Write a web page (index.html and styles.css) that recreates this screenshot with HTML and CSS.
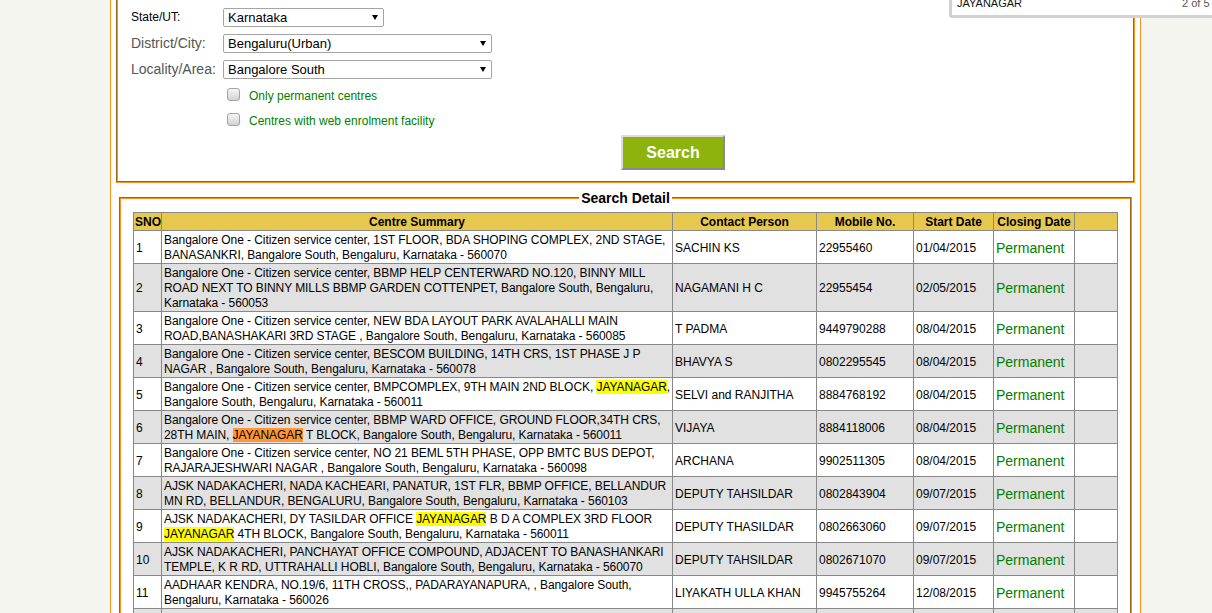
FILE: index.html
```html
<!DOCTYPE html>
<html lang="en">
<head>
    <meta charset="UTF-8">
    <meta name="viewport" content="width=device-width, initial-scale=1.0">
    <title>Locate an Enrolment Centre</title>
    <link rel="stylesheet" href="styles.css">
</head>
<body>

    <!-- browser find bar -->
    <div class="findbar">
        <span class="find-text">JAYANAGAR</span>
        <span class="find-count">2 of 5</span>
    </div>

    <div class="page">
        <form class="search-form" id="searchForm">
            <div class="form-row">
                <label class="field-label label-state" for="state">State/UT:</label>
                <span class="select-wrap narrow">
                    <select id="state" name="state">
                        <option>Karnataka</option>
                    </select>
                </span>
            </div>
            <div class="form-row">
                <label class="field-label" for="district">District/City:</label>
                <span class="select-wrap">
                    <select id="district" name="district">
                        <option>Bengaluru(Urban)</option>
                    </select>
                </span>
            </div>
            <div class="form-row">
                <label class="field-label" for="locality">Locality/Area:</label>
                <span class="select-wrap">
                    <select id="locality" name="locality">
                        <option>Bangalore South</option>
                    </select>
                </span>
            </div>
            <div class="check-row">
                <label class="check"><input type="checkbox" name="permanent"><span>Only permanent centres</span></label>
            </div>
            <div class="check-row">
                <label class="check"><input type="checkbox" name="web"><span>Centres with web enrolment facility</span></label>
            </div>
            <div class="button-row">
                <button type="submit">Search</button>
            </div>
        </form>

        <fieldset class="results">
            <legend>Search Detail</legend>
            <table>
                <colgroup>
                    <col class="c-sno">
                    <col class="c-summary">
                    <col class="c-contact">
                    <col class="c-mobile">
                    <col class="c-start">
                    <col class="c-closing">
                    <col class="c-extra">
                </colgroup>
                <thead>
                    <tr>
                        <th>SNO</th>
                        <th>Centre Summary</th>
                        <th>Contact Person</th>
                        <th>Mobile No.</th>
                        <th>Start Date</th>
                        <th>Closing Date</th>
                        <th></th>
                    </tr>
                </thead>
                <tbody>
                    <tr>
                        <td>1</td>
                        <td class="summary">Bangalore One - Citizen service center, 1ST FLOOR, BDA SHOPING COMPLEX, 2ND STAGE,<br>BANASANKRI, Bangalore South, Bengaluru, Karnataka - 560070</td>
                        <td>SACHIN KS</td>
                        <td>22955460</td>
                        <td>01/04/2015</td>
                        <td class="closing">Permanent</td>
                        <td></td>
                    </tr>
                    <tr>
                        <td>2</td>
                        <td class="summary">Bangalore One - Citizen service center, BBMP HELP CENTERWARD NO.120, BINNY MILL<br>ROAD NEXT TO BINNY MILLS BBMP GARDEN COTTENPET, Bangalore South, Bengaluru,<br>Karnataka - 560053</td>
                        <td>NAGAMANI H C</td>
                        <td>22955454</td>
                        <td>02/05/2015</td>
                        <td class="closing">Permanent</td>
                        <td></td>
                    </tr>
                    <tr>
                        <td>3</td>
                        <td class="summary">Bangalore One - Citizen service center, NEW BDA LAYOUT PARK AVALAHALLI MAIN<br>ROAD,BANASHAKARI 3RD STAGE , Bangalore South, Bengaluru, Karnataka - 560085</td>
                        <td>T PADMA</td>
                        <td>9449790288</td>
                        <td>08/04/2015</td>
                        <td class="closing">Permanent</td>
                        <td></td>
                    </tr>
                    <tr>
                        <td>4</td>
                        <td class="summary">Bangalore One - Citizen service center, BESCOM BUILDING, 14TH CRS, 1ST PHASE J P<br>NAGAR , Bangalore South, Bengaluru, Karnataka - 560078</td>
                        <td>BHAVYA S</td>
                        <td>0802295545</td>
                        <td>08/04/2015</td>
                        <td class="closing">Permanent</td>
                        <td></td>
                    </tr>
                    <tr>
                        <td>5</td>
                        <td class="summary">Bangalore One - Citizen service center, BMPCOMPLEX, 9TH MAIN 2ND BLOCK, <mark>JAYANAGAR</mark>,<br>Bangalore South, Bengaluru, Karnataka - 560011</td>
                        <td>SELVI and RANJITHA</td>
                        <td>8884768192</td>
                        <td>08/04/2015</td>
                        <td class="closing">Permanent</td>
                        <td></td>
                    </tr>
                    <tr>
                        <td>6</td>
                        <td class="summary">Bangalore One - Citizen service center, BBMP WARD OFFICE, GROUND FLOOR,34TH CRS,<br>28TH MAIN, <mark class="current">JAYANAGAR</mark> T BLOCK, Bangalore South, Bengaluru, Karnataka - 560011</td>
                        <td>VIJAYA</td>
                        <td>8884118006</td>
                        <td>08/04/2015</td>
                        <td class="closing">Permanent</td>
                        <td></td>
                    </tr>
                    <tr>
                        <td>7</td>
                        <td class="summary">Bangalore One - Citizen service center, NO 21 BEML 5TH PHASE, OPP BMTC BUS DEPOT,<br>RAJARAJESHWARI NAGAR , Bangalore South, Bengaluru, Karnataka - 560098</td>
                        <td>ARCHANA</td>
                        <td>9902511305</td>
                        <td>08/04/2015</td>
                        <td class="closing">Permanent</td>
                        <td></td>
                    </tr>
                    <tr>
                        <td>8</td>
                        <td class="summary">AJSK NADAKACHERI, NADA KACHEARI, PANATUR, 1ST FLR, BBMP OFFICE, BELLANDUR<br>MN RD, BELLANDUR, BENGALURU, Bangalore South, Bengaluru, Karnataka - 560103</td>
                        <td>DEPUTY TAHSILDAR</td>
                        <td>0802843904</td>
                        <td>09/07/2015</td>
                        <td class="closing">Permanent</td>
                        <td></td>
                    </tr>
                    <tr>
                        <td>9</td>
                        <td class="summary">AJSK NADAKACHERI, DY TASILDAR OFFICE <mark>JAYANAGAR</mark> B D A COMPLEX 3RD FLOOR<br><mark>JAYANAGAR</mark> 4TH BLOCK, Bangalore South, Bengaluru, Karnataka - 560011</td>
                        <td>DEPUTY THASILDAR</td>
                        <td>0802663060</td>
                        <td>09/07/2015</td>
                        <td class="closing">Permanent</td>
                        <td></td>
                    </tr>
                    <tr>
                        <td>10</td>
                        <td class="summary">AJSK NADAKACHERI, PANCHAYAT OFFICE COMPOUND, ADJACENT TO BANASHANKARI<br>TEMPLE, K R RD, UTTRAHALLI HOBLI, Bangalore South, Bengaluru, Karnataka - 560070</td>
                        <td>DEPUTY TAHSILDAR</td>
                        <td>0802671070</td>
                        <td>09/07/2015</td>
                        <td class="closing">Permanent</td>
                        <td></td>
                    </tr>
                    <tr>
                        <td>11</td>
                        <td class="summary">AADHAAR KENDRA, NO.19/6, 11TH CROSS,, PADARAYANAPURA, , Bangalore South,<br>Bengaluru, Karnataka - 560026</td>
                        <td>LIYAKATH ULLA KHAN</td>
                        <td>9945755264</td>
                        <td>12/08/2015</td>
                        <td class="closing">Permanent</td>
                        <td></td>
                    </tr>
                    <tr>
                        <td>12</td>
                        <td class="summary">AADHAAR KENDRA, BBMP WARD OFFICE, 9TH BLOCK,<br><mark>JAYANAGAR</mark>, Bangalore South, Bengaluru, Karnataka - 560069</td>
                        <td>RAVI KUMAR</td>
                        <td>9845012233</td>
                        <td>14/08/2015</td>
                        <td class="closing">Permanent</td>
                        <td></td>
                    </tr>
                </tbody>
            </table>
        </fieldset>
    </div>

</body>
</html>
```

FILE: styles.css
```css
html, body {
    overflow: hidden;
}

body {
    font-family: 'Liberation Sans', Arial, sans-serif;
    background-color: #f5f5f0;
    margin: 0;
    color: #000;
}

.page {
    margin-left: 110px;
    width: 1029px;
    min-height: 100vh;
    background: #fff;
    border-left: 1px solid #f7941d;
    border-right: 1px solid #f7941d;
}

/* search form panel */
.search-form {
    margin: 0 5px;
    border: 2px groove #f7941d;
    border-top: 0;
    padding: 4px 10px 11px 13px;
}

.form-row {
    display: flex;
    align-items: center;
    height: 26px;
}

.field-label {
    width: 92px;
    font-size: 14px;
    color: #555;
}

.label-state {
    font-size: 12px;
    color: #000;
}

.select-wrap {
    position: relative;
    display: inline-block;
}

.select-wrap::after {
    content: "";
    position: absolute;
    top: 7px;
    right: 6px;
    border-left: 3px solid transparent;
    border-right: 3px solid transparent;
    border-top: 5px solid #000;
    pointer-events: none;
}

select {
    appearance: none;
    -webkit-appearance: none;
    display: block;
    width: 269px;
    height: 19px;
    padding: 0 0 0 4px;
    border: 1px solid #a5a5a5;
    border-radius: 2px;
    background: #fff;
    color: #000;
    font-family: 'Liberation Sans', Arial, sans-serif;
    font-size: 13px;
}

.narrow select {
    width: 161px;
}

.check-row {
    display: flex;
    align-items: center;
    height: 25px;
    padding-left: 92px;
}

.check {
    display: flex;
    align-items: center;
    color: #008000;
    font-size: 12px;
}

.check span {
    padding-top: 2px;
}

.check input {
    appearance: none;
    -webkit-appearance: none;
    width: 13px;
    height: 13px;
    margin: 0 9px 0 4px;
    border: 1px solid #a3a3a3;
    border-radius: 3px;
    background: linear-gradient(#f6f6f6, #d2d2d2);
}

.button-row {
    display: flex;
    justify-content: center;
    padding-left: 92px;
    margin-top: 3px;
}

button {
    width: 104px;
    height: 35px;
    background-color: #8cb40c;
    color: #fff;
    border: 2px solid;
    border-color: #dcdcdc #8a8a8a #8a8a8a #dcdcdc;
    font-family: 'Liberation Sans', Arial, sans-serif;
    font-size: 16px;
    font-weight: bold;
    cursor: pointer;
}

/* results */
.results {
    margin: 7px 8px 0;
    border: 2px groove #f7941d;
    padding: 6px 12px 20px;
    min-width: 0;
}

.results legend {
    margin: 0 auto;
    padding: 0 2px;
    font-size: 14px;
    line-height: 16px;
    font-weight: bold;
}

table {
    border-collapse: collapse;
    table-layout: fixed;
    width: 985px;
    font-size: 12px;
    line-height: 15px;
}

.c-sno { width: 28px; }
.c-summary { width: 511px; }
.c-contact { width: 144px; }
.c-mobile { width: 97px; }
.c-start { width: 80px; }
.c-closing { width: 81px; }
.c-extra { width: 43px; }

th {
    background-color: #e6c84f;
    border: 1px solid #888;
    padding: 2px 1px 0;
    font-weight: bold;
    text-align: center;
}

td {
    border: 1px solid #888;
    padding: 2px 2px 0;
    vertical-align: middle;
    text-align: left;
}

tbody tr:nth-child(even) {
    background-color: #e1e1e1;
}

td.summary {
    white-space: nowrap;
    letter-spacing: -0.07px;
}

td.closing {
    color: #008000;
    font-size: 14px;
}

mark {
    background-color: #ffff00;
    color: inherit;
}

mark.current {
    background-color: #ff9632;
}

/* find bar overlay */
.findbar {
    position: fixed;
    top: -12px;
    left: 949px;
    width: 296px;
    height: 30px;
    box-sizing: border-box;
    display: flex;
    align-items: center;
    padding-left: 5px;
    background: #fff;
    border: 3px solid #d2d2d2;
    border-radius: 3px;
    font-size: 11px;
    z-index: 5;
}

.find-text {
    flex: 1;
    color: #111;
}

.find-count {
    width: 60px;
    color: #555;
}
```
